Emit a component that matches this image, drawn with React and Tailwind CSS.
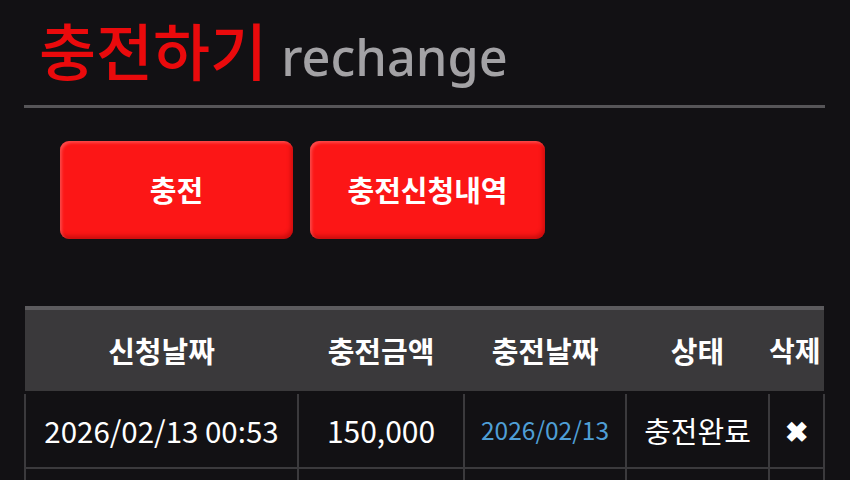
const history = [
  { requested: '2026/02/13 00:53', amount: '150,000', charged: '2026/02/13', status: '충전완료' },
  { requested: '2026/02/12 21:17', amount: '100,000', charged: '2026/02/12', status: '충전완료' },
];

const kr = "font-['Noto_Sans_CJK_KR',sans-serif]";
const cell = 'border-[2px] border-[#3b3a3d]';

export default function App() {
  return (
    <div className={`w-full h-[480px] overflow-hidden bg-[#121114] pl-[24px] pr-[25px] ${kr}`}>
      <div className="flex items-baseline gap-[14px] h-[105px] pt-[7px] pl-[15px]">
        <h1 className="text-[62px] leading-[84px] font-medium text-[#ea0a0c]">충전하기</h1>
        <span className="text-[50.5px] leading-[84px] font-medium text-[#a3a2a5] font-['Noto_Sans',sans-serif]">rechange</span>
      </div>
      <div className="h-[3px] bg-[#565558]" />

      <div className="flex gap-[17px] pl-[36px] pt-[33px]">
        <button className="w-[233px] h-[98px] rounded-[9px] bg-[#fc1616] text-white text-[29px] font-bold shadow-[inset_2px_2px_3px_rgba(255,140,140,0.45),inset_-2px_-3px_4px_rgba(140,0,0,0.45)]">
          충전
        </button>
        <button className="w-[235px] h-[98px] rounded-[9px] bg-[#fc1616] text-white text-[29px] font-bold shadow-[inset_2px_2px_3px_rgba(255,140,140,0.45),inset_-2px_-3px_4px_rgba(140,0,0,0.45)]">
          충전신청내역
        </button>
      </div>

      <table className="w-full mt-[67px] table-fixed border-collapse">
        <colgroup>
          <col className="w-[273px]" />
          <col className="w-[166px]" />
          <col className="w-[162px]" />
          <col className="w-[143px]" />
          <col />
        </colgroup>
        <thead>
          <tr className="bg-[#3a393b] border-t-[4px] border-[#5c5b5e] border-b-[3px] border-b-[#121114] text-white text-[29px] font-bold whitespace-nowrap">
            <th className="h-[84px]">신청날짜</th>
            <th>충전금액</th>
            <th>충전날짜</th>
            <th>상태</th>
            <th className="text-left px-0 text-[28px]">삭제</th>
          </tr>
        </thead>
        <tbody>
          {history.map((h) => (
            <tr key={h.requested} className="text-white text-center">
              <td className={`h-[76px] ${cell} text-[29.5px]`}>{h.requested}</td>
              <td className={`${cell} text-[30px]`}>{h.amount}</td>
              <td className={`${cell} text-[24.5px] text-[#4f9fd6]`}>{h.charged}</td>
              <td className={`${cell} text-[29px]`}>{h.status}</td>
              <td className={`${cell} text-[28px] font-bold`}>✖</td>
            </tr>
          ))}
        </tbody>
      </table>
    </div>
  );
}
